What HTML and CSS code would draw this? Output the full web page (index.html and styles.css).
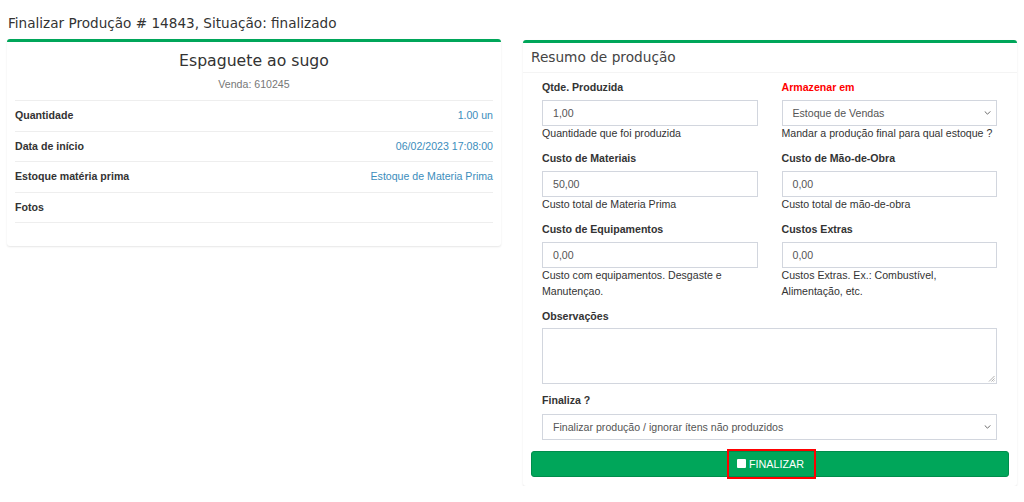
FILE: index.html
```html
<!DOCTYPE html>
<html lang="pt-BR">
<head>
<meta charset="utf-8">
<title>Finalizar Produção</title>
<link rel="stylesheet" href="styles.css">
</head>
<body>
<h1 class="page-title">Finalizar Produção # 14843, Situação: finalizado</h1>
<div class="columns">
  <section class="box box-left">
    <h2 class="product-name">Espaguete ao sugo</h2>
    <p class="sale">Venda: 610245</p>
    <ul class="info-list">
      <li><b>Quantidade</b><a>1.00 un</a></li>
      <li><b>Data de início</b><a>06/02/2023 17:08:00</a></li>
      <li><b>Estoque matéria prima</b><a>Estoque de Materia Prima</a></li>
      <li><b>Fotos</b></li>
    </ul>
  </section>
  <section class="box box-right">
    <div class="box-header"><h3 class="box-title">Resumo de produção</h3></div>
    <div class="box-body">
      <div class="form-grid">
        <div class="form-group">
          <label>Qtde. Produzida</label>
          <div class="input">1,00</div>
          <p class="help">Quantidade que foi produzida</p>
        </div>
        <div class="form-group">
          <label class="required">Armazenar em</label>
          <div class="input select">Estoque de Vendas<svg class="chev" viewBox="0 0 8 5" width="8" height="5"><path d="M0.5 0.5 L4 4 L7.5 0.5" fill="none" stroke="#555" stroke-width="1.1"/></svg></div>
          <p class="help">Mandar a produção final para qual estoque ?</p>
        </div>
        <div class="form-group">
          <label>Custo de Materiais</label>
          <div class="input">50,00</div>
          <p class="help">Custo total de Materia Prima</p>
        </div>
        <div class="form-group">
          <label>Custo de Mão-de-Obra</label>
          <div class="input">0,00</div>
          <p class="help">Custo total de mão-de-obra</p>
        </div>
        <div class="form-group">
          <label>Custo de Equipamentos</label>
          <div class="input">0,00</div>
          <p class="help">Custo com equipamentos. Desgaste e Manutençao.</p>
        </div>
        <div class="form-group">
          <label>Custos Extras</label>
          <div class="input">0,00</div>
          <p class="help">Custos Extras. Ex.: Combustível, Alimentação, etc.</p>
        </div>
        <div class="form-group full obs">
          <label>Observações</label>
          <div class="textarea"><svg class="grip" viewBox="0 0 7 7" width="7" height="7"><path d="M6.5 1 L1 6.5 M6.5 3.5 L3.5 6.5 M6.5 5.5 L5.5 6.5" stroke="#999" stroke-width="0.8"/></svg></div>
        </div>
        <div class="form-group full last">
          <label>Finaliza ?</label>
          <div class="input select">Finalizar produção / ignorar ítens não produzidos<svg class="chev" viewBox="0 0 8 5" width="8" height="5"><path d="M0.5 0.5 L4 4 L7.5 0.5" fill="none" stroke="#555" stroke-width="1.1"/></svg></div>
        </div>
      </div>
      <button class="btn-finish"><span class="mark"><span class="sq"></span>FINALIZAR</span></button>
    </div>
  </section>
</div>
</body>
</html>
```

FILE: styles.css
```css
* { box-sizing: border-box; }
html, body { margin: 0; padding: 0; background: #fff; }
body {
  font-family: "Liberation Sans", Arial, sans-serif;
  font-size: 10.6px;
  color: #333;
  padding: 0 7px;
}
.page-title {
  font-family: "DejaVu Sans", sans-serif;
  font-weight: normal;
  font-size: 13.6px;
  color: #333;
  margin: 0;
  padding: 13px 1px 0;
  line-height: 20px;
  height: 39px;
}
.columns {
  display: flex;
  gap: 22px;
  align-items: flex-start;
}
.box {
  background: #fff;
  border-top: 3px solid #00a65a;
  border-radius: 3px;
  box-shadow: 0 1px 2px rgba(0,0,0,0.1);
}
.box-left {
  width: 494px;
  padding: 8px 8px 23px;
}
.product-name {
  font-family: "DejaVu Sans", sans-serif;
  font-weight: normal;
  font-size: 15.7px;
  color: #333;
  text-align: center;
  margin: 0;
  line-height: 22px;
}
.sale {
  text-align: center;
  color: #777;
  font-size: 10.6px;
  margin: 5px 0 0;
  line-height: 14px;
}
.info-list {
  list-style: none;
  margin: 9px 0 0;
  padding: 0;
  border-top: 1px solid #eee;
}
.info-list li {
  display: flex;
  justify-content: space-between;
  border-bottom: 1px solid #eee;
  padding: 7.25px 0;
  line-height: 15px;
}
.info-list b { font-weight: bold; color: #333; }
.info-list a { color: #3c8dbc; }
.box-right {
  width: 494px;
  margin-top: 1px;
}
.box-header {
  padding: 3px 8px 0;
  height: 30px;
  border-bottom: 1px solid #f4f4f4;
}
.box-title {
  font-family: "DejaVu Sans", sans-serif;
  font-weight: normal;
  font-size: 13.7px;
  color: #444;
  margin: 0;
  line-height: 22px;
}
.box-body {
  padding: 6.5px 8px 9px;
}
.form-grid {
  display: grid;
  grid-template-columns: 1fr 1fr;
  column-gap: 24px;
  padding: 0 12px 0 11px;
}
.form-group { margin-bottom: 9.5px; }
.form-group.full { grid-column: 1 / span 2; }
.form-group.obs label { margin-bottom: 4px; }
.form-group.last { margin-bottom: 11px; }
label {
  display: block;
  font-weight: bold;
  line-height: 15px;
  margin-bottom: 5.5px;
}
label.required { color: #f00; }
.input {
  height: 26px;
  border: 1px solid #d2d6de;
  padding: 0 10px;
  line-height: 24px;
  color: #555;
  position: relative;
}
.select .chev {
  position: absolute;
  right: 5px;
  top: 10px;
  width: 7px;
  height: 4px;
}
.help {
  margin: -1px 0 0;
  line-height: 16px;
  color: #333;
}
.textarea {
  height: 56px;
  border: 1px solid #d2d6de;
  position: relative;
}
.textarea .grip {
  position: absolute;
  right: 1px;
  bottom: 1px;
}
.btn-finish {
  display: flex;
  justify-content: center;
  align-items: center;
  width: 100%;
  height: 26px;
  background: #00a65a;
  border: 1px solid #008d4c;
  border-radius: 3px;
  color: #fff;
  font-family: "Liberation Sans", Arial, sans-serif;
  font-size: 10.8px;
  padding: 0;
}
.mark {
  display: inline-flex;
  align-items: center;
  gap: 3px;
  border: 2px solid #f00;
  height: 30px;
  padding: 0 10px 0 8px;
  margin-left: 3px;
}
.sq {
  display: inline-block;
  width: 9px;
  height: 9px;
  background: #fff;
  border-radius: 1px;
}
```
